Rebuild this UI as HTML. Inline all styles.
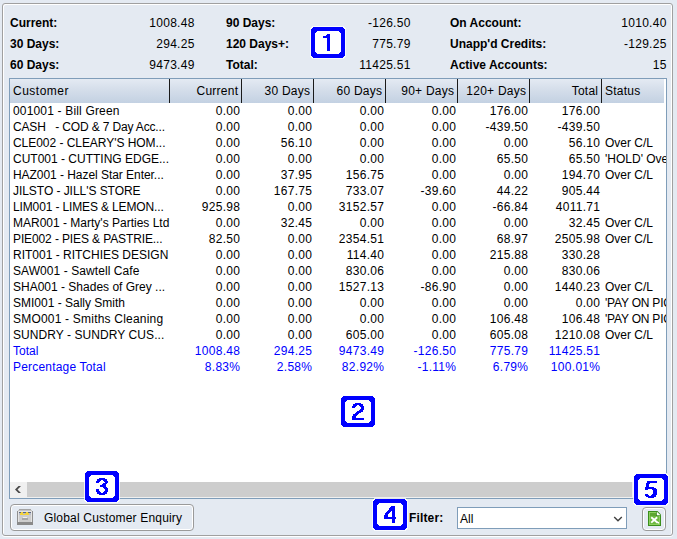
<!DOCTYPE html>
<html><head><meta charset="utf-8">
<style>
html,body{margin:0;padding:0}
body{width:677px;height:539px;overflow:hidden;position:relative;background:#e4eaf2;font-family:"Liberation Sans",sans-serif;font-size:12px;color:#000}
.panel{position:absolute;left:2px;top:3px;width:669px;height:531px;border:1px solid #a0a0a0;border-radius:3px;box-shadow:inset 1px 1px 0 #fff, inset -1px 0 0 #fff, 0 1px 0 #fff}
.s{position:absolute;line-height:16px;white-space:nowrap}
.b{font-weight:bold}
.tbl{position:absolute;left:9px;top:78px;width:656px;height:419px;border:1px solid #7f9db9;background:#fff}
.hdr{position:absolute;left:10px;top:79px;width:654px;height:24px;background:linear-gradient(#e4eaf3,#d6dfeb 40%,#c3d1e2)}
.sep{position:absolute;top:79px;width:1px;height:24px;background:#1a1a1a}
.h{position:absolute;top:83px;line-height:16px;white-space:nowrap;letter-spacing:0.25px}
.c{position:absolute;line-height:16px;white-space:nowrap}
.cr{text-align:right}
.num{letter-spacing:0.3px}
.blue{color:#0000ff}
.st{width:61px;overflow:hidden;text-overflow:clip}
.sbt{position:absolute;left:10px;top:482px;width:656px;height:16px;background:#f0f0f0}
.sb{position:absolute;left:27px;top:482px;width:605px;height:15px;background:#cdcdcd}
.sbl{position:absolute;left:10px;top:482px;width:17px;height:16px;background:#f0f0f0}
.btn{position:absolute;border:1px solid #9a9a9a;border-radius:4px;box-shadow:inset 0 0 0 1px #fff}
.combo{position:absolute;left:457px;top:507px;width:168px;height:20px;border:1px solid #7f9db9;background:#fff}
.cosvg{position:absolute}
</style></head><body>
<div class="panel"></div>
<div class="s b" style="top:15px;left:10px">Current:</div>
<div class="s num" style="top:15px;right:482.30px">1008.48</div>
<div class="s b" style="top:36px;left:10px">30 Days:</div>
<div class="s num" style="top:36px;right:482.30px">294.25</div>
<div class="s b" style="top:57px;left:10px">60 Days:</div>
<div class="s num" style="top:57px;right:482.30px">9473.49</div>
<div class="s b" style="top:15px;left:226px">90 Days:</div>
<div class="s num" style="top:15px;right:266.30px">-126.50</div>
<div class="s b" style="top:36px;left:226px">120 Days+:</div>
<div class="s num" style="top:36px;right:266.30px">775.79</div>
<div class="s b" style="top:57px;left:226px">Total:</div>
<div class="s num" style="top:57px;right:266.30px">11425.51</div>
<div class="s b" style="top:15px;left:450px">On Account:</div>
<div class="s num" style="top:15px;right:10.30px">1010.40</div>
<div class="s b" style="top:36px;left:450px">Unapp'd Credits:</div>
<div class="s num" style="top:36px;right:10.30px">-129.25</div>
<div class="s b" style="top:57px;left:450px">Active Accounts:</div>
<div class="s num" style="top:57px;right:10.30px">15</div>
<div class="tbl"></div>
<div class="hdr"></div>
<div class="sep" style="left:169px"></div>
<div class="sep" style="left:241px"></div>
<div class="sep" style="left:313px"></div>
<div class="sep" style="left:385px"></div>
<div class="sep" style="left:457px"></div>
<div class="sep" style="left:529px"></div>
<div class="sep" style="left:601px"></div>
<div class="h cl" style="left:13px;letter-spacing:0.5px">Customer</div>
<div class="h cr" style="right:438.75px">Current</div>
<div class="h cr" style="right:366.75px">30 Days</div>
<div class="h cr" style="right:294.75px">60 Days</div>
<div class="h cr" style="right:222.75px">90+ Days</div>
<div class="h cr" style="right:150.75px">120+ Days</div>
<div class="h cr" style="right:78.75px">Total</div>
<div class="h cl" style="left:605px">Status</div>
<div class="c cl " style="top:103px;left:13px;letter-spacing:0.167px">001001 - Bill Green</div>
<div class="c cr num " style="top:103px;right:436.70px">0.00</div>
<div class="c cr num " style="top:103px;right:364.70px">0.00</div>
<div class="c cr num " style="top:103px;right:292.70px">0.00</div>
<div class="c cr num " style="top:103px;right:220.70px">0.00</div>
<div class="c cr num " style="top:103px;right:148.70px">176.00</div>
<div class="c cr num " style="top:103px;right:76.70px">176.00</div>
<div class="c cl " style="top:119px;left:13px;letter-spacing:-0.154px">CASH &nbsp;&nbsp;- COD &amp; 7 Day Acc...</div>
<div class="c cr num " style="top:119px;right:436.70px">0.00</div>
<div class="c cr num " style="top:119px;right:364.70px">0.00</div>
<div class="c cr num " style="top:119px;right:292.70px">0.00</div>
<div class="c cr num " style="top:119px;right:220.70px">0.00</div>
<div class="c cr num " style="top:119px;right:148.70px">-439.50</div>
<div class="c cr num " style="top:119px;right:76.70px">-439.50</div>
<div class="c cl " style="top:135px;left:13px;letter-spacing:-0.043px">CLE002 - CLEARY'S HOM...</div>
<div class="c cr num " style="top:135px;right:436.70px">0.00</div>
<div class="c cr num " style="top:135px;right:364.70px">56.10</div>
<div class="c cr num " style="top:135px;right:292.70px">0.00</div>
<div class="c cr num " style="top:135px;right:220.70px">0.00</div>
<div class="c cr num " style="top:135px;right:148.70px">0.00</div>
<div class="c cr num " style="top:135px;right:76.70px">56.10</div>
<div class="c cl st " style="top:135px;left:605px">Over C/L</div>
<div class="c cl " style="top:151px;left:13px">CUT001 - CUTTING EDGE...</div>
<div class="c cr num " style="top:151px;right:436.70px">0.00</div>
<div class="c cr num " style="top:151px;right:364.70px">0.00</div>
<div class="c cr num " style="top:151px;right:292.70px">0.00</div>
<div class="c cr num " style="top:151px;right:220.70px">0.00</div>
<div class="c cr num " style="top:151px;right:148.70px">65.50</div>
<div class="c cr num " style="top:151px;right:76.70px">65.50</div>
<div class="c cl st " style="top:151px;left:605px">'HOLD' Over C/L</div>
<div class="c cl " style="top:167px;left:13px;letter-spacing:-0.048px">HAZ001 - Hazel Star Enter...</div>
<div class="c cr num " style="top:167px;right:436.70px">0.00</div>
<div class="c cr num " style="top:167px;right:364.70px">37.95</div>
<div class="c cr num " style="top:167px;right:292.70px">156.75</div>
<div class="c cr num " style="top:167px;right:220.70px">0.00</div>
<div class="c cr num " style="top:167px;right:148.70px">0.00</div>
<div class="c cr num " style="top:167px;right:76.70px">194.70</div>
<div class="c cl st " style="top:167px;left:605px">Over C/L</div>
<div class="c cl " style="top:183px;left:13px;letter-spacing:-0.050px">JILSTO - JILL'S STORE</div>
<div class="c cr num " style="top:183px;right:436.70px">0.00</div>
<div class="c cr num " style="top:183px;right:364.70px">167.75</div>
<div class="c cr num " style="top:183px;right:292.70px">733.07</div>
<div class="c cr num " style="top:183px;right:220.70px">-39.60</div>
<div class="c cr num " style="top:183px;right:148.70px">44.22</div>
<div class="c cr num " style="top:183px;right:76.70px">905.44</div>
<div class="c cl " style="top:199px;left:13px;letter-spacing:-0.137px">LIM001 - LIMES &amp; LEMON...</div>
<div class="c cr num " style="top:199px;right:436.70px">925.98</div>
<div class="c cr num " style="top:199px;right:364.70px">0.00</div>
<div class="c cr num " style="top:199px;right:292.70px">3152.57</div>
<div class="c cr num " style="top:199px;right:220.70px">0.00</div>
<div class="c cr num " style="top:199px;right:148.70px">-66.84</div>
<div class="c cr num " style="top:199px;right:76.70px">4011.71</div>
<div class="c cl " style="top:215px;left:13px">MAR001 - Marty's Parties Ltd</div>
<div class="c cr num " style="top:215px;right:436.70px">0.00</div>
<div class="c cr num " style="top:215px;right:364.70px">32.45</div>
<div class="c cr num " style="top:215px;right:292.70px">0.00</div>
<div class="c cr num " style="top:215px;right:220.70px">0.00</div>
<div class="c cr num " style="top:215px;right:148.70px">0.00</div>
<div class="c cr num " style="top:215px;right:76.70px">32.45</div>
<div class="c cl st " style="top:215px;left:605px">Over C/L</div>
<div class="c cl " style="top:231px;left:13px;letter-spacing:-0.116px">PIE002 - PIES &amp; PASTRIE...</div>
<div class="c cr num " style="top:231px;right:436.70px">82.50</div>
<div class="c cr num " style="top:231px;right:364.70px">0.00</div>
<div class="c cr num " style="top:231px;right:292.70px">2354.51</div>
<div class="c cr num " style="top:231px;right:220.70px">0.00</div>
<div class="c cr num " style="top:231px;right:148.70px">68.97</div>
<div class="c cr num " style="top:231px;right:76.70px">2505.98</div>
<div class="c cl st " style="top:231px;left:605px">Over C/L</div>
<div class="c cl " style="top:247px;left:13px">RIT001 - RITCHIES DESIGN</div>
<div class="c cr num " style="top:247px;right:436.70px">0.00</div>
<div class="c cr num " style="top:247px;right:364.70px">0.00</div>
<div class="c cr num " style="top:247px;right:292.70px">114.40</div>
<div class="c cr num " style="top:247px;right:220.70px">0.00</div>
<div class="c cr num " style="top:247px;right:148.70px">215.88</div>
<div class="c cr num " style="top:247px;right:76.70px">330.28</div>
<div class="c cl " style="top:263px;left:13px;letter-spacing:0.075px">SAW001 - Sawtell Cafe</div>
<div class="c cr num " style="top:263px;right:436.70px">0.00</div>
<div class="c cr num " style="top:263px;right:364.70px">0.00</div>
<div class="c cr num " style="top:263px;right:292.70px">830.06</div>
<div class="c cr num " style="top:263px;right:220.70px">0.00</div>
<div class="c cr num " style="top:263px;right:148.70px">0.00</div>
<div class="c cr num " style="top:263px;right:76.70px">830.06</div>
<div class="c cl " style="top:279px;left:13px">SHA001 - Shades of Grey ...</div>
<div class="c cr num " style="top:279px;right:436.70px">0.00</div>
<div class="c cr num " style="top:279px;right:364.70px">0.00</div>
<div class="c cr num " style="top:279px;right:292.70px">1527.13</div>
<div class="c cr num " style="top:279px;right:220.70px">-86.90</div>
<div class="c cr num " style="top:279px;right:148.70px">0.00</div>
<div class="c cr num " style="top:279px;right:76.70px">1440.23</div>
<div class="c cl st " style="top:279px;left:605px">Over C/L</div>
<div class="c cl " style="top:295px;left:13px">SMI001 - Sally Smith</div>
<div class="c cr num " style="top:295px;right:436.70px">0.00</div>
<div class="c cr num " style="top:295px;right:364.70px">0.00</div>
<div class="c cr num " style="top:295px;right:292.70px">0.00</div>
<div class="c cr num " style="top:295px;right:220.70px">0.00</div>
<div class="c cr num " style="top:295px;right:148.70px">0.00</div>
<div class="c cr num " style="top:295px;right:76.70px">0.00</div>
<div class="c cl st " style="top:295px;left:605px;letter-spacing:-0.2px">'PAY ON PICKUP'</div>
<div class="c cl " style="top:311px;left:13px;letter-spacing:0.204px">SMO001 - Smiths Cleaning</div>
<div class="c cr num " style="top:311px;right:436.70px">0.00</div>
<div class="c cr num " style="top:311px;right:364.70px">0.00</div>
<div class="c cr num " style="top:311px;right:292.70px">0.00</div>
<div class="c cr num " style="top:311px;right:220.70px">0.00</div>
<div class="c cr num " style="top:311px;right:148.70px">106.48</div>
<div class="c cr num " style="top:311px;right:76.70px">106.48</div>
<div class="c cl st " style="top:311px;left:605px;letter-spacing:-0.2px">'PAY ON PICKUP'</div>
<div class="c cl " style="top:327px;left:13px;letter-spacing:0.071px">SUNDRY - SUNDRY CUS...</div>
<div class="c cr num " style="top:327px;right:436.70px">0.00</div>
<div class="c cr num " style="top:327px;right:364.70px">0.00</div>
<div class="c cr num " style="top:327px;right:292.70px">605.00</div>
<div class="c cr num " style="top:327px;right:220.70px">0.00</div>
<div class="c cr num " style="top:327px;right:148.70px">605.08</div>
<div class="c cr num " style="top:327px;right:76.70px">1210.08</div>
<div class="c cl st " style="top:327px;left:605px">Over C/L</div>
<div class="c cl blue" style="top:343px;left:13px">Total</div>
<div class="c cr num blue" style="top:343px;right:436.70px">1008.48</div>
<div class="c cr num blue" style="top:343px;right:364.70px">294.25</div>
<div class="c cr num blue" style="top:343px;right:292.70px">9473.49</div>
<div class="c cr num blue" style="top:343px;right:220.70px">-126.50</div>
<div class="c cr num blue" style="top:343px;right:148.70px">775.79</div>
<div class="c cr num blue" style="top:343px;right:76.70px">11425.51</div>
<div class="c cl blue" style="top:359px;left:13px;letter-spacing:0.187px">Percentage Total</div>
<div class="c cr num blue" style="top:359px;right:436.70px">8.83%</div>
<div class="c cr num blue" style="top:359px;right:364.70px">2.58%</div>
<div class="c cr num blue" style="top:359px;right:292.70px">82.92%</div>
<div class="c cr num blue" style="top:359px;right:220.70px">-1.11%</div>
<div class="c cr num blue" style="top:359px;right:148.70px">6.79%</div>
<div class="c cr num blue" style="top:359px;right:76.70px">100.01%</div>
<div class="sbt"></div>
<div class="sb"></div>
<div class="sbl"></div>
<svg style="position:absolute;left:14px;top:485px" width="9" height="9"><path d="M7 1 L4.5 1 L1 4.5 L4.5 8 L7 8 L3.5 4.5 Z" fill="#4a4a4a"/></svg>
<div class="btn" style="left:10px;top:504px;width:182px;height:25px"></div>
<svg style="position:absolute;left:17px;top:509px" width="16" height="16" shape-rendering="crispEdges">
 <rect x="2" y="0" width="12" height="1" fill="#a4a4a4"/>
 <rect x="1" y="1" width="14" height="1" fill="#c4c4c4"/>
 <rect x="0" y="2" width="16" height="14" fill="#8f8f8f"/>
 <rect x="1" y="2" width="14" height="11" fill="#e4e4e4"/>
 <rect x="2" y="3" width="12" height="3" fill="#b8bcc8"/>
 <rect x="2" y="3" width="12" height="1" fill="#5b6682"/>
 <rect x="3" y="4" width="3" height="2" fill="#f3d23c"/>
 <rect x="4" y="3" width="2" height="1" fill="#f3d23c"/>
 <rect x="6" y="5" width="2" height="1" fill="#f3d23c"/>
 <rect x="8" y="4" width="4" height="2" fill="#f3d23c"/>
 <rect x="9" y="3" width="2" height="1" fill="#f3d23c"/>
 <rect x="2" y="6" width="12" height="7" fill="#cdcdcd"/>
 <rect x="6" y="8" width="4" height="1" fill="#f0f0f0"/>
 <rect x="5" y="9" width="6" height="2" fill="#a8a8a8"/>
 <rect x="0" y="13" width="16" height="3" fill="#8a8a8a"/>
</svg>
<div class="s" style="left:44px;top:510px;letter-spacing:0.18px">Global Customer Enquiry</div>
<div class="s b" style="left:409px;top:510px;letter-spacing:0.15px">Filter:</div>
<div class="combo"></div>
<div class="s" style="left:460px;top:511px">All</div>
<svg style="position:absolute;left:612px;top:514px" width="12" height="9"><path d="M2.2 3 L6 6.7 L9.8 3" stroke="#404040" stroke-width="1.4" fill="none"/></svg>
<div class="btn" style="left:642px;top:507px;width:22px;height:22px"></div>
<svg style="position:absolute;left:648px;top:511px" width="13" height="15">
 <path d="M0 0 H9.5 L13 3.5 V15 H0 Z" fill="#3b8f1d"/>
 <path d="M1 1 H9 L12 4 V14 H1 Z" fill="#8ccf5e"/>
 <path d="M2 2 H8.5 L11 4.5 V13 H2 Z" fill="#6db941"/>
 <rect x="2" y="2" width="6" height="3" fill="#5ea632"/>
 <path d="M8 0.8 V5 H12.5 V4.2 H8.8 V0.8 Z" fill="#2f7d14"/>
 <path d="M8.8 0.8 L12.5 4.2 H8.8 Z" fill="#fff"/>
 <path d="M3.2 6.2 L9.6 11.8 M9.2 6.2 L3.2 11.6" stroke="#fff" stroke-width="1.9"/>
 <path d="M8 10.5 L10.5 13 L11.2 11 Z" fill="#fff"/>
</svg>
<svg class="cosvg" style="left:310px;top:26px" width="36" height="33" shape-rendering="crispEdges"><rect x="2" y="0" width="32" height="33" fill="rgba(255,255,255,0.75)"/><rect x="1" y="1" width="34" height="31" fill="rgba(255,255,255,0.75)"/><rect x="0" y="2" width="36" height="29" fill="rgba(255,255,255,0.75)"/><rect x="3" y="1" width="30" height="31" fill="#0000ff"/><rect x="2" y="2" width="32" height="29" fill="#0000ff"/><rect x="1" y="3" width="34" height="27" fill="#0000ff"/><rect x="7" y="5" width="22" height="23" fill="#fff"/><rect x="6" y="6" width="24" height="21" fill="#fff"/><rect x="5" y="7" width="26" height="19" fill="#fff"/><g fill="#0000ff" transform="translate(1,1)"><rect x="16" y="7" width="3" height="1"/><rect x="15" y="8" width="4" height="1"/><rect x="12" y="9" width="7" height="1"/><rect x="12" y="10" width="7" height="1"/><rect x="16" y="11" width="3" height="1"/><rect x="16" y="12" width="3" height="1"/><rect x="16" y="13" width="3" height="1"/><rect x="16" y="14" width="3" height="1"/><rect x="16" y="15" width="3" height="1"/><rect x="16" y="16" width="3" height="1"/><rect x="16" y="17" width="3" height="1"/><rect x="16" y="18" width="3" height="1"/><rect x="16" y="19" width="3" height="1"/><rect x="16" y="20" width="3" height="1"/><rect x="16" y="21" width="3" height="1"/><rect x="16" y="22" width="3" height="1"/><rect x="16" y="23" width="3" height="1"/></g></svg>
<svg class="cosvg" style="left:340px;top:395px" width="36" height="33" shape-rendering="crispEdges"><rect x="2" y="0" width="32" height="33" fill="rgba(255,255,255,0.75)"/><rect x="1" y="1" width="34" height="31" fill="rgba(255,255,255,0.75)"/><rect x="0" y="2" width="36" height="29" fill="rgba(255,255,255,0.75)"/><rect x="3" y="1" width="30" height="31" fill="#0000ff"/><rect x="2" y="2" width="32" height="29" fill="#0000ff"/><rect x="1" y="3" width="34" height="27" fill="#0000ff"/><rect x="7" y="5" width="22" height="23" fill="#fff"/><rect x="6" y="6" width="24" height="21" fill="#fff"/><rect x="5" y="7" width="26" height="19" fill="#fff"/><g fill="#0000ff" transform="translate(1,1)"><rect x="14" y="7" width="6" height="1"/><rect x="12" y="8" width="10" height="1"/><rect x="12" y="9" width="4" height="1"/><rect x="18" y="9" width="4" height="1"/><rect x="11" y="10" width="4" height="1"/><rect x="19" y="10" width="4" height="1"/><rect x="11" y="11" width="3" height="1"/><rect x="20" y="11" width="3" height="1"/><rect x="20" y="12" width="3" height="1"/><rect x="19" y="13" width="4" height="1"/><rect x="18" y="14" width="4" height="1"/><rect x="16" y="15" width="6" height="1"/><rect x="15" y="16" width="5" height="1"/><rect x="14" y="17" width="4" height="1"/><rect x="12" y="18" width="5" height="1"/><rect x="12" y="19" width="4" height="1"/><rect x="11" y="20" width="4" height="1"/><rect x="11" y="21" width="4" height="1"/><rect x="11" y="22" width="12" height="1"/><rect x="11" y="23" width="12" height="1"/></g></svg>
<svg class="cosvg" style="left:84px;top:470px" width="36" height="33" shape-rendering="crispEdges"><rect x="2" y="0" width="32" height="33" fill="rgba(255,255,255,0.75)"/><rect x="1" y="1" width="34" height="31" fill="rgba(255,255,255,0.75)"/><rect x="0" y="2" width="36" height="29" fill="rgba(255,255,255,0.75)"/><rect x="3" y="1" width="30" height="31" fill="#0000ff"/><rect x="2" y="2" width="32" height="29" fill="#0000ff"/><rect x="1" y="3" width="34" height="27" fill="#0000ff"/><rect x="7" y="5" width="22" height="23" fill="#fff"/><rect x="6" y="6" width="24" height="21" fill="#fff"/><rect x="5" y="7" width="26" height="19" fill="#fff"/><g fill="#0000ff" transform="translate(1,1)"><rect x="14" y="7" width="6" height="1"/><rect x="12" y="8" width="10" height="1"/><rect x="12" y="9" width="4" height="1"/><rect x="18" y="9" width="4" height="1"/><rect x="11" y="10" width="4" height="1"/><rect x="19" y="10" width="4" height="1"/><rect x="11" y="11" width="3" height="1"/><rect x="20" y="11" width="3" height="1"/><rect x="18" y="12" width="4" height="1"/><rect x="17" y="13" width="4" height="1"/><rect x="15" y="14" width="6" height="1"/><rect x="15" y="15" width="6" height="1"/><rect x="18" y="16" width="4" height="1"/><rect x="19" y="17" width="4" height="1"/><rect x="11" y="18" width="3" height="1"/><rect x="20" y="18" width="3" height="1"/><rect x="11" y="19" width="3" height="1"/><rect x="20" y="19" width="3" height="1"/><rect x="11" y="20" width="4" height="1"/><rect x="19" y="20" width="4" height="1"/><rect x="12" y="21" width="4" height="1"/><rect x="18" y="21" width="4" height="1"/><rect x="12" y="22" width="10" height="1"/><rect x="14" y="23" width="6" height="1"/></g></svg>
<svg class="cosvg" style="left:372px;top:498px" width="36" height="33" shape-rendering="crispEdges"><rect x="2" y="0" width="32" height="33" fill="rgba(255,255,255,0.75)"/><rect x="1" y="1" width="34" height="31" fill="rgba(255,255,255,0.75)"/><rect x="0" y="2" width="36" height="29" fill="rgba(255,255,255,0.75)"/><rect x="3" y="1" width="30" height="31" fill="#0000ff"/><rect x="2" y="2" width="32" height="29" fill="#0000ff"/><rect x="1" y="3" width="34" height="27" fill="#0000ff"/><rect x="7" y="5" width="22" height="23" fill="#fff"/><rect x="6" y="6" width="24" height="21" fill="#fff"/><rect x="5" y="7" width="26" height="19" fill="#fff"/><g fill="#0000ff" transform="translate(1,1)"><rect x="18" y="7" width="4" height="1"/><rect x="17" y="8" width="5" height="1"/><rect x="16" y="9" width="6" height="1"/><rect x="16" y="10" width="6" height="1"/><rect x="15" y="11" width="7" height="1"/><rect x="14" y="12" width="4" height="1"/><rect x="19" y="12" width="3" height="1"/><rect x="13" y="13" width="4" height="1"/><rect x="19" y="13" width="3" height="1"/><rect x="12" y="14" width="4" height="1"/><rect x="19" y="14" width="3" height="1"/><rect x="12" y="15" width="3" height="1"/><rect x="19" y="15" width="3" height="1"/><rect x="11" y="16" width="4" height="1"/><rect x="19" y="16" width="3" height="1"/><rect x="11" y="17" width="4" height="1"/><rect x="19" y="17" width="3" height="1"/><rect x="11" y="18" width="12" height="1"/><rect x="11" y="19" width="12" height="1"/><rect x="19" y="20" width="3" height="1"/><rect x="19" y="21" width="3" height="1"/><rect x="19" y="22" width="3" height="1"/><rect x="19" y="23" width="3" height="1"/></g></svg>
<svg class="cosvg" style="left:633px;top:473px" width="36" height="33" shape-rendering="crispEdges"><rect x="2" y="0" width="32" height="33" fill="rgba(255,255,255,0.75)"/><rect x="1" y="1" width="34" height="31" fill="rgba(255,255,255,0.75)"/><rect x="0" y="2" width="36" height="29" fill="rgba(255,255,255,0.75)"/><rect x="3" y="1" width="30" height="31" fill="#0000ff"/><rect x="2" y="2" width="32" height="29" fill="#0000ff"/><rect x="1" y="3" width="34" height="27" fill="#0000ff"/><rect x="7" y="5" width="22" height="23" fill="#fff"/><rect x="6" y="6" width="24" height="21" fill="#fff"/><rect x="5" y="7" width="26" height="19" fill="#fff"/><g fill="#0000ff" transform="translate(1,1)"><rect x="13" y="7" width="10" height="1"/><rect x="13" y="8" width="10" height="1"/><rect x="12" y="9" width="4" height="1"/><rect x="12" y="10" width="3" height="1"/><rect x="12" y="11" width="3" height="1"/><rect x="12" y="12" width="3" height="1"/><rect x="11" y="13" width="9" height="1"/><rect x="11" y="14" width="11" height="1"/><rect x="11" y="15" width="3" height="1"/><rect x="18" y="15" width="5" height="1"/><rect x="19" y="16" width="4" height="1"/><rect x="19" y="17" width="4" height="1"/><rect x="19" y="18" width="4" height="1"/><rect x="19" y="19" width="4" height="1"/><rect x="11" y="20" width="3" height="1"/><rect x="18" y="20" width="5" height="1"/><rect x="11" y="21" width="4" height="1"/><rect x="17" y="21" width="5" height="1"/><rect x="12" y="22" width="10" height="1"/><rect x="14" y="23" width="6" height="1"/></g></svg>
</body></html>
